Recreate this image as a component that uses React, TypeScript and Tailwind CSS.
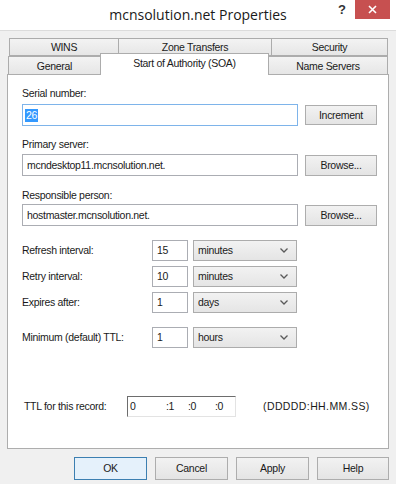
import { ReactNode } from "react";

const BODY_FONT = "font-['Liberation_Sans',Arial,sans-serif]";

function Chevron() {
  return (
    <svg width="8" height="5" viewBox="0 0 8 5" className="shrink-0">
      <path d="M0.5 0.5 L4 4 L7.5 0.5" fill="none" stroke="#5a5a5a" strokeWidth="1.3" />
    </svg>
  );
}

function TabButton({ children, className = "" }: { children: ReactNode; className?: string }) {
  return (
    <div
      className={`flex items-center justify-center h-[18px] pt-px border border-[#acacac] bg-gradient-to-b from-[#f3f3f3] to-[#e6e6e6] ${className}`}
    >
      {children}
    </div>
  );
}

function PushButton({ children, primary = false, className = "" }: { children: ReactNode; primary?: boolean; className?: string }) {
  return (
    <button
      className={`flex items-center justify-center border ${
        primary
          ? "border-[#3c7fb1] bg-[#e5f1fb]"
          : "border-[#adadad] bg-gradient-to-b from-[#f2f2f2] to-[#e4e4e4]"
      } ${className}`}
    >
      {children}
    </button>
  );
}

function TextBox({ value, className = "" }: { value: string; className?: string }) {
  return (
    <div className={`flex items-center border border-[#abadb3] bg-white pl-[4px] ${className}`}>
      {value}
    </div>
  );
}

function IntervalRow({ label, value, unit, className = "" }: { label: string; value: string; unit: string; className?: string }) {
  return (
    <div className={`flex items-center h-[21px] ${className}`}>
      <span className="w-[130px]">{label}</span>
      <TextBox value={value} className="w-[36px] h-[21px]" />
      <div className="ml-[5px] w-[104px] h-[21px] flex items-center justify-between border border-[#acacac] bg-gradient-to-b from-[#f2f2f2] to-[#e5e5e5] pl-[4px] pr-[8px]">
        <span>{unit}</span>
        <Chevron />
      </div>
    </div>
  );
}

export default function App() {
  return (
    <div className={`w-[396px] h-[484px] overflow-hidden bg-[#f0f0f0] text-[#1a1a1a] text-[10.5px] leading-[13px] tracking-[-0.3px] ${BODY_FONT}`}>
      {/* Title bar */}
      <div className="h-[31px] bg-white border-b border-[#dcdcdc] grid grid-cols-[1fr_auto_1fr] tracking-normal">
        <div />
        <div className="pt-[5px] text-[14px] leading-[20px] text-[#1a1a1a] font-['Open_Sans','Noto_Sans',sans-serif]">
          mcnsolution.net Properties
        </div>
        <div className="flex justify-end items-start pr-[6px]">
          <span className="mt-[3px] mr-[9px] text-[13px] font-bold text-[#333] font-['Liberation_Sans',sans-serif]">?</span>
          <div className="w-[35px] h-[19px] bg-[#c75050] flex items-center justify-center">
            <svg width="9" height="9" viewBox="0 0 9 9">
              <path d="M1 1 L8 8 M8 1 L1 8" stroke="white" strokeWidth="1.6" />
            </svg>
          </div>
        </div>
      </div>

      <div className="px-[7px] pt-[7px]">
        {/* Tabs, back row */}
        <div className="flex ml-[2px] mr-[1px]">
          <TabButton className="w-[110px]">WINS</TabButton>
          <TabButton className="w-[154px] -ml-px">Zone Transfers</TabButton>
          <TabButton className="flex-1 -ml-px">Security</TabButton>
        </div>
        {/* Tabs, front row */}
        <div className="flex items-end h-[21px] -mt-[3px] ml-[1px] relative z-10">
          <TabButton className="w-[93px] border-b-0">General</TabButton>
          <div className="w-[169px] h-[22px] -mb-px -ml-px bg-white border border-b-0 border-[#acacac] flex justify-center pt-[3px]">
            Start of Authority (SOA)
          </div>
          <TabButton className="flex-1 -ml-px mr-[1px] border-b-0">Name Servers</TabButton>
        </div>

        {/* Panel */}
        <div className="h-[375px] bg-white border border-[#adadad] pl-[14px] pt-[12px] flex flex-col">
          <span>Serial number:</span>
          <div className="flex items-center mt-[4px]">
            <div className="w-[276px] h-[22px] border border-[#7eb4ea] flex items-center pl-[2px]">
              <span className="bg-[#3399ff] text-white px-px">26</span>
            </div>
            <PushButton className="ml-[7px] w-[72px] h-[20px]">Increment</PushButton>
          </div>

          <span className="mt-[12px]">Primary server:</span>
          <div className="flex items-center mt-[3px]">
            <TextBox value="mcndesktop11.mcnsolution.net." className="w-[276px] h-[22px]" />
            <PushButton className="ml-[7px] w-[72px] h-[21px]">Browse...</PushButton>
          </div>

          <span className="mt-[13px]">Responsible person:</span>
          <div className="flex items-center mt-[2px]">
            <TextBox value="hostmaster.mcnsolution.net." className="w-[276px] h-[22px]" />
            <PushButton className="ml-[7px] w-[72px] h-[21px]">Browse...</PushButton>
          </div>

          <IntervalRow label="Refresh interval:" value="15" unit="minutes" className="mt-[14px]" />
          <IntervalRow label="Retry interval:" value="10" unit="minutes" className="mt-[5px]" />
          <IntervalRow label="Expires after:" value="1" unit="days" className="mt-[5px]" />
          <IntervalRow label="Minimum (default) TTL:" value="1" unit="hours" className="mt-[14px]" />

          <div className="flex items-center h-[21px] mt-[48px] pl-[2px]">
            <span className="w-[103px]">TTL for this record:</span>
            <div className="w-[109px] h-[21px] flex items-center bg-white border border-t-[#6d6d6d] border-l-[#6d6d6d] border-r-[#e3e3e3] border-b-[#e3e3e3]">
              <span className="w-[38px] pl-[2px]">0</span>
              <span className="w-[22px]">:1</span>
              <span className="w-[27px]">:0</span>
              <span>:0</span>
            </div>
            <span className="ml-[27px] tracking-[0.4px]">(DDDDD:HH.MM.SS)</span>
          </div>
        </div>

        {/* Dialog buttons */}
        <div className="flex justify-end gap-[8px] mt-[8px]">
          <PushButton primary className="w-[73px] h-[23px]">OK</PushButton>
          <PushButton className="w-[73px] h-[23px]">Cancel</PushButton>
          <PushButton className="w-[73px] h-[23px]">Apply</PushButton>
          <PushButton className="w-[72px] h-[23px]">Help</PushButton>
        </div>
      </div>
    </div>
  );
}
